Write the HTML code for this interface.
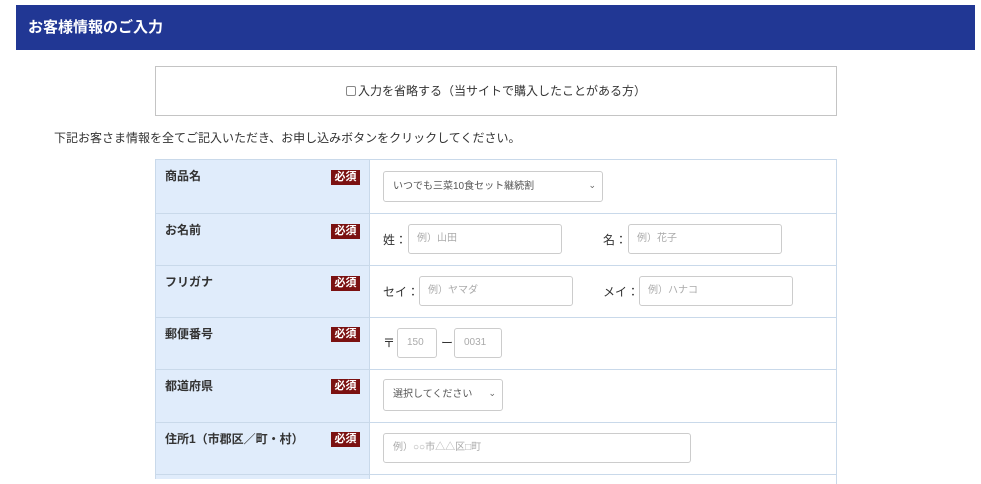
<!DOCTYPE html><html><head><meta charset="utf-8"><style>
*{box-sizing:border-box;margin:0;padding:0}
body{width:981px;height:476px;background:#fff;font-family:"Liberation Sans","Noto Sans CJK JP",sans-serif;position:relative;overflow:hidden;color:#333}
.a{position:absolute}
.hd{left:16px;top:5px;width:959px;height:45px;background:#213794;color:#fff;font-weight:bold;font-size:15px;line-height:45px;padding-left:12px}
.box{left:155px;top:66px;width:682px;height:50px;border:1px solid #c4c4c4;font-size:12px;line-height:48px;text-align:center;color:#333}
.cb{display:inline-block;width:10px;height:10px;border:1px solid #888;border-radius:2px;vertical-align:-1px;margin-right:2px}
.th{left:155px;width:215px;background:#e0ecfb;border-top:1px solid #c9d9ea;border-left:1px solid #c9d9ea;border-right:1px solid #c9d9ea}
.td{left:369px;width:468px;border-top:1px solid #c9d9ea;border-right:1px solid #c9d9ea}
.lb{font-size:12px;font-weight:bold;color:#333;left:165px}
.bd{left:331px;width:29px;height:15px;background:#7b1111;color:#fff;font-size:11px;font-weight:bold;text-align:center;line-height:15px}
.in{border:1px solid #ccc;border-radius:3px;font-size:10px;color:#aaa;padding-left:18px;background:#fff;display:flex;align-items:center;line-height:1}
.t{font-size:12px;color:#333}
.ch{position:absolute;right:6px;top:50%;margin-top:-6px;font-size:9px;color:#666}
</style></head><body>
<div class="a hd">お客様情報のご入力</div>
<div class="a box"><span class="cb"></span>入力を省略する（当サイトで購入したことがある方）</div>
<div class="a t" style="left:54px;top:129px">下記お客さま情報を全てご記入いただき、お申し込みボタンをクリックしてください。</div>

<div class="a th" style="top:159px;height:320px"></div>
<div class="a td" style="top:159px;height:54px"></div>
<div class="a td" style="top:213px;height:52px"></div>
<div class="a td" style="top:265px;height:52px"></div>
<div class="a td" style="top:317px;height:52px"></div>
<div class="a td" style="top:369px;height:53px"></div>
<div class="a td" style="top:422px;height:52px"></div>
<div class="a td" style="top:474px;height:10px"></div>
<div class="a" style="left:155px;top:213px;width:215px;border-top:1px solid #c9d9ea"></div>
<div class="a" style="left:155px;top:265px;width:215px;border-top:1px solid #c9d9ea"></div>
<div class="a" style="left:155px;top:317px;width:215px;border-top:1px solid #c9d9ea"></div>
<div class="a" style="left:155px;top:369px;width:215px;border-top:1px solid #c9d9ea"></div>
<div class="a" style="left:155px;top:422px;width:215px;border-top:1px solid #c9d9ea"></div>
<div class="a" style="left:155px;top:474px;width:215px;border-top:1px solid #c9d9ea"></div>

<div class="a lb" style="top:167px">商品名</div><div class="a bd" style="top:170px">必須</div>
<div class="a lb" style="top:221px">お名前</div><div class="a bd" style="top:224px">必須</div>
<div class="a lb" style="top:273px">フリガナ</div><div class="a bd" style="top:276px">必須</div>
<div class="a lb" style="top:325px">郵便番号</div><div class="a bd" style="top:327px">必須</div>
<div class="a lb" style="top:377px">都道府県</div><div class="a bd" style="top:379px">必須</div>
<div class="a lb" style="top:430px">住所1（市郡区／町・村）</div><div class="a bd" style="top:432px">必須</div>

<div class="a in" style="left:383px;top:171px;width:220px;height:31px;padding-left:9px;color:#555">いつでも三菜10食セット継続割<span class="ch">⌄</span></div>
<div class="a t" style="left:383px;top:231px">姓：</div>
<div class="a in" style="left:408px;top:224px;width:154px;height:30px;padding-left:8px">例）山田</div>
<div class="a t" style="left:603px;top:231px">名：</div>
<div class="a in" style="left:628px;top:224px;width:154px;height:30px;padding-left:8px">例）花子</div>
<div class="a t" style="left:383px;top:283px">セイ：</div>
<div class="a in" style="left:419px;top:276px;width:154px;height:30px;padding-left:8px">例）ヤマダ</div>
<div class="a t" style="left:603px;top:283px">メイ：</div>
<div class="a in" style="left:639px;top:276px;width:154px;height:30px;padding-left:8px">例）ハナコ</div>
<div class="a t" style="left:383px;top:334px">〒</div>
<div class="a in" style="left:397px;top:328px;width:40px;height:30px;padding-left:9px">150</div>
<div class="a t" style="left:441px;top:334px">ー</div>
<div class="a in" style="left:454px;top:328px;width:48px;height:30px;padding-left:9px">0031</div>
<div class="a in" style="left:383px;top:379px;width:120px;height:32px;padding-left:9px;color:#555">選択してください<span class="ch">⌄</span></div>
<div class="a in" style="left:383px;top:433px;width:308px;height:30px;padding-left:9px">例）○○市△△区□町</div>
</body></html>
